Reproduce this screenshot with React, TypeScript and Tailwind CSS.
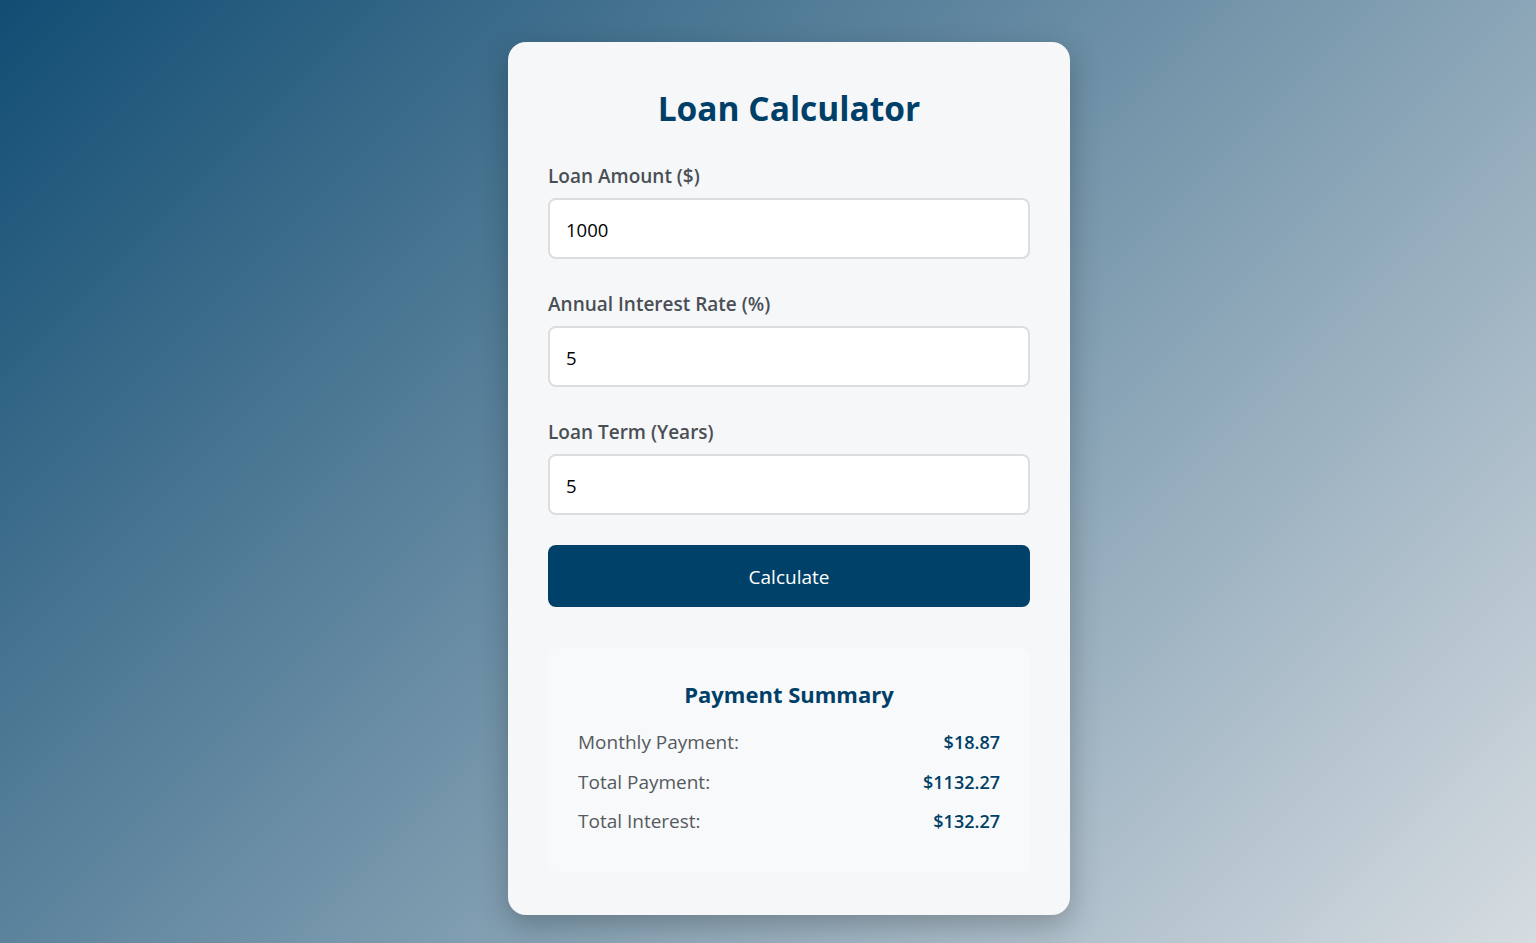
import React from "react";

const font = { fontFamily: '"Open Sans", "Noto Sans", sans-serif' };

function Field({ label, value, mt }: { label: string; value: string; mt: string }) {
  return (
    <div className={mt}>
      <div className="h-[24px] flex items-center text-[19px] font-semibold text-[#4a4f55]">{label}</div>
      <div className="mt-[10px] h-[61px] rounded-[8px] border-2 border-[#dddddd] bg-white flex items-center px-[16px] pt-[3px] text-[18.5px] text-black">
        {value}
      </div>
    </div>
  );
}

export default function App() {
  return (
    <div
      className="min-h-[943px] w-full flex justify-center pl-[42px] bg-[linear-gradient(135deg,#114d73_0%,#d6dce1_100%)]"
      style={font}
    >
      <div className="mt-[42px] mb-[28px] w-[562px] h-[873px] rounded-[18px] bg-[#f5f7f9] shadow-[0_10px_30px_rgba(0,0,0,0.25)] px-[40px] pt-[40px]">
        <div className="h-[52px] flex items-center justify-center text-[33.5px] font-bold text-[#004068]">
          Loan Calculator
        </div>
        <Field label="Loan Amount ($)" value="1000" mt="mt-[30px]" />
        <Field label="Annual Interest Rate (%)" value="5" mt="mt-[33px]" />
        <Field label="Loan Term (Years)" value="5" mt="mt-[33px]" />
        <div className="mt-[30px] h-[62px] rounded-[8px] bg-[#00416a] flex items-center justify-center pt-[3px] text-white text-[19px]">
          Calculate
        </div>
        <div className="mt-[40px] h-[226px] rounded-[12px] bg-[#f8f9fa] px-[30px] pt-[32px]">
          <div className="h-[30px] flex items-center justify-center text-[22px] font-bold text-[#004068]">
            Payment Summary
          </div>
          <div className="mt-[21px] flex flex-col gap-[14.5px]">
            {[
              ["Monthly Payment:", "$18.87"],
              ["Total Payment:", "$1132.27"],
              ["Total Interest:", "$132.27"],
            ].map(([l, v]) => (
              <div key={l} className="h-[25px] flex items-center justify-between">
                <span className="text-[19px] text-[#555a60]">{l}</span>
                <span className="text-[18px] font-semibold text-[#003f66]">{v}</span>
              </div>
            ))}
          </div>
        </div>
      </div>
    </div>
  );
}
